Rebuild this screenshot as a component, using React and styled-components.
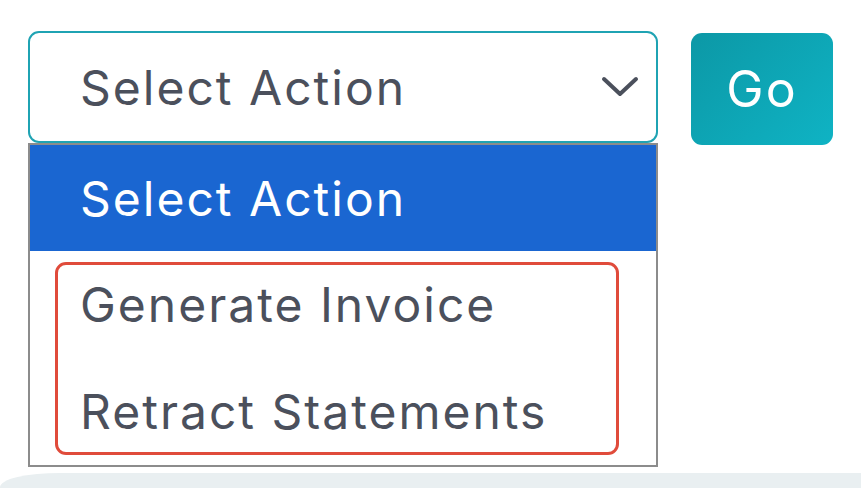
import React from 'react';
import styled, { createGlobalStyle } from 'styled-components';

const GlobalStyle = createGlobalStyle`
  html, body {
    margin: 0;
    padding: 0;
    background: #ffffff;
  }
`;

const Page = styled.div`
  position: relative;
  width: 861px;
  height: 488px;
  overflow: hidden;
  display: flex;
  flex-direction: column;
  font-family: "Inter", "Liberation Sans", sans-serif;
  letter-spacing: 2px;
`;

const Main = styled.div`
  flex: 1;
  padding: 31px 0 0 28px;
`;

const Band = styled.div`
  height: 15px;
  background: #e9eff1;
  border-top-left-radius: 60px 14px;
`;

const Row = styled.div`
  display: flex;
  align-items: flex-start;
  gap: 33px;
`;

const SelectWrap = styled.div`
  position: relative;
  width: 630px;
`;

const SelectBox = styled.div`
  box-sizing: border-box;
  height: 112px;
  border: 2px solid #1fa3b3;
  border-radius: 11px;
  display: flex;
  align-items: center;
  justify-content: space-between;
  padding: 0 17px 0 50px;
  color: #4b505c;
  font-size: 48px;
  background: #fff;
`;

const Chevron = styled.svg`
  width: 38px;
  height: 22px;
`;

const GoButton = styled.button`
  margin-top: 2px;
  width: 142px;
  height: 112px;
  border: none;
  border-radius: 11px;
  background: linear-gradient(135deg, #0c98a6 0%, #0fb3c4 100%);
  color: #ffffff;
  font-family: inherit;
  font-size: 50px;
  letter-spacing: 2px;
  padding: 0;
`;

const List = styled.div`
  position: absolute;
  top: 112px;
  left: 0;
  right: 0;
  box-sizing: border-box;
  border: 2px solid #8c8c8c;
  background: #ffffff;
`;

const Option = styled.div`
  height: ${p => (p.$active ? 106 : 107)}px;
  display: flex;
  align-items: center;
  padding-left: 50px;
  font-size: 48px;
  color: ${p => (p.$active ? '#ffffff' : '#4b505c')};
  background: ${p => (p.$active ? '#1a66d1' : 'transparent')};
`;

const Highlight = styled.div`
  position: absolute;
  left: 25px;
  top: 117px;
  width: 564px;
  height: 193px;
  box-sizing: border-box;
  border: 3px solid #e04b3b;
  border-radius: 11px;
  pointer-events: none;
`;

export default function App() {
  return (
    <>
      <GlobalStyle />
      <Page>
        <Main>
          <Row>
            <SelectWrap>
              <SelectBox>
                <span>Select Action</span>
                <Chevron viewBox="0 0 38 22">
                  <path
                    d="M3 3 L19 18 L35 3"
                    fill="none"
                    stroke="#4b505c"
                    strokeWidth="4"
                    strokeLinecap="round"
                    strokeLinejoin="round"
                  />
                </Chevron>
              </SelectBox>
              <List>
                <Option $active>Select Action</Option>
                <Option>Generate Invoice</Option>
                <Option>Retract Statements</Option>
                <Highlight />
              </List>
            </SelectWrap>
            <GoButton>Go</GoButton>
          </Row>
        </Main>
        <Band />
      </Page>
    </>
  );
}
